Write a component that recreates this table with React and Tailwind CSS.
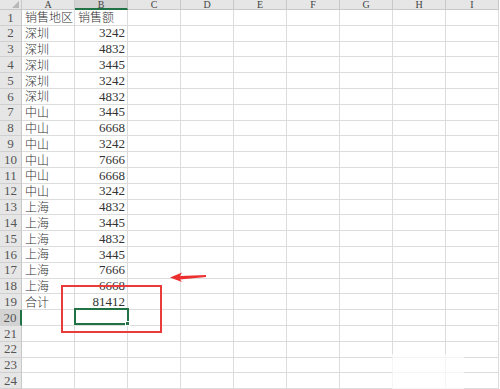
import React from "react";

const cols = ["A", "B", "C", "D", "E", "F", "G", "H", "I"];
const data = [
  ["销售地区", "销售额"],
  ["深圳", "3242"],
  ["深圳", "4832"],
  ["深圳", "3445"],
  ["深圳", "3242"],
  ["深圳", "4832"],
  ["中山", "3445"],
  ["中山", "6668"],
  ["中山", "3242"],
  ["中山", "7666"],
  ["中山", "6668"],
  ["中山", "3242"],
  ["上海", "4832"],
  ["上海", "3445"],
  ["上海", "4832"],
  ["上海", "3445"],
  ["上海", "7666"],
  ["上海", "6668"],
  ["合计", "81412"],
];

const cjk = { fontFamily: '"Noto Sans CJK SC", "Liberation Serif", serif' };
const serif = { fontFamily: '"Liberation Serif", "Noto Sans CJK SC", serif' };

export default function App() {
  const rows = Array.from({ length: 24 }, (_, i) => i + 1);
  return (
    <div className="relative w-[500px] h-[389px] overflow-hidden bg-white">
      {/* header row */}
      <div className="flex h-[10px]">
        <div className="w-[22px] shrink-0 bg-[#e6e6e6] border-r border-b border-[#c8c8c8] relative">
          <div className="absolute right-[2px] bottom-[1px] w-0 h-0 border-l-[7px] border-l-transparent border-b-[7px] border-b-[#b8b8b8]" />
        </div>
        {cols.map((c) => (
          <div
            key={c}
            style={serif}
            className={
              "w-[53px] shrink-0 flex items-center justify-center text-[10px] leading-[9px] text-[#444] border-r " +
              (c === "B"
                ? "bg-[#d3d3d3] border-[#c0c0c0] border-b-2 border-b-[#217346]"
                : "bg-[#e6e6e6] border-[#c8c8c8] border-b border-b-[#c8c8c8]")
            }
          >
            <span>{c}</span>
          </div>
        ))}
      </div>
      {rows.map((r) => {
        const d = data[r - 1];
        return (
          <div key={r} className="flex h-[15.8px]">
            <div
              style={serif}
              className={
                "w-[22px] shrink-0 flex items-center justify-center text-[13px] text-[#555] border-b border-[#d0d0d0] " +
                (r === 20
                  ? "bg-[#d3d3d3] border-r-2 border-r-[#217346]"
                  : "bg-[#e6e6e6] border-r border-r-[#c8c8c8]")
              }
            >
              {r}
            </div>
            {cols.map((c, ci) => (
              <div
                key={c}
                className="w-[53px] shrink-0 border-r border-b border-[#dcdcdc] flex items-center overflow-visible whitespace-nowrap"
              >
                {d && ci === 0 && (
                  <span style={cjk} className="pl-[3px] text-[12px] text-[#333] font-light">
                    {d[0]}
                  </span>
                )}
                {d && ci === 1 && (
                  <span
                    style={/^\d+$/.test(d[1]) ? serif : cjk}
                    className={
                      /^\d+$/.test(d[1])
                        ? "ml-auto pr-[2px] text-[13px] text-[#333]"
                        : "pl-[3px] text-[12px] text-[#333] font-light"
                    }
                  >
                    {d[1]}
                  </span>
                )}
              </div>
            ))}
          </div>
        );
      })}

      {/* selected cell B20 */}
      <div className="absolute left-[74px] top-[308px] w-[55px] h-[17px] border-2 border-[#217346]">
        <div className="absolute -right-[3px] -bottom-[3px] w-[5px] h-[5px] bg-[#217346] border border-white" />
      </div>

      {/* red annotation rectangle */}
      <div className="absolute left-[61px] top-[285px] w-[101px] h-[48px] border-2 border-[#ea3b3b]" />

      {/* red arrow */}
      <svg className="absolute left-[166px] top-[270px]" width="44" height="14" viewBox="0 0 44 14">
        <polygon
          points="4,7.5 16,2.5 14,6 40,5 40,7 14,9.5 16,12"
          fill="#ec3030"
        />
      </svg>

      {/* faded watermark area */}
      <div className="absolute left-[392px] top-[354px] w-[72px] h-[35px] bg-white/70" />
    </div>
  );
}
